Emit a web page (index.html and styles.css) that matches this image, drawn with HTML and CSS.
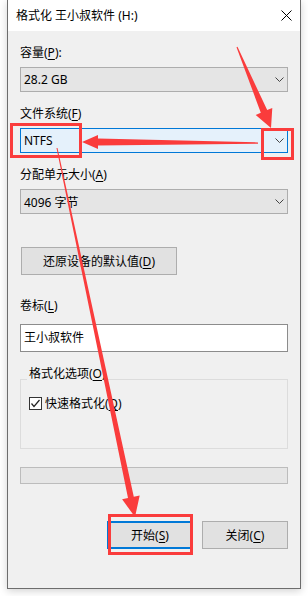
FILE: index.html
```html
<!DOCTYPE html>
<html lang="zh-CN">
<head>
    <meta charset="UTF-8">
    <meta name="viewport" content="width=device-width, initial-scale=1.0">
    <title>格式化 王小叔软件 (H:)</title>
    <link rel="stylesheet" href="styles.css">
</head>
<body>
    <div class="window">
        <div class="titlebar">
            <span class="title">格式化 王小叔软件 (H:)</span>
            <svg class="close" width="11" height="11" viewBox="0 0 11 11">
                <path d="M0.5 0.5 L10.5 10.5 M10.5 0.5 L0.5 10.5" stroke="#000" stroke-width="1" fill="none"/>
            </svg>
        </div>
        <div class="content">
            <div class="label first">容量(<u>P</u>):</div>
            <div class="combo">
                <span>28.2 GB</span>
                <svg class="chevron" width="9" height="5" viewBox="0 0 9 5"><polyline points="0.5,0.5 4.5,4.5 8.5,0.5" fill="none" stroke="#444" stroke-width="1"/></svg>
            </div>

            <div class="label">文件系统(<u>F</u>)</div>
            <div class="combo focused">
                <span>NTFS</span>
                <svg class="chevron" width="9" height="5" viewBox="0 0 9 5"><polyline points="0.5,0.5 4.5,4.5 8.5,0.5" fill="none" stroke="#444" stroke-width="1"/></svg>
            </div>

            <div class="label">分配单元大小(<u>A</u>)</div>
            <div class="combo">
                <span>4096 字节</span>
                <svg class="chevron" width="9" height="5" viewBox="0 0 9 5"><polyline points="0.5,0.5 4.5,4.5 8.5,0.5" fill="none" stroke="#444" stroke-width="1"/></svg>
            </div>

            <button class="btn restore">还原设备的默认值(<u>D</u>)</button>

            <div class="label volume">卷标(<u>L</u>)</div>
            <div class="textbox">王小叔软件</div>

            <fieldset class="group">
                <legend>格式化选项(<u>O</u>)</legend>
                <div class="check-row">
                    <span class="checkbox">
                        <svg width="11" height="11" viewBox="0 0 11 11"><polyline points="1.5,5.5 4,8.5 9.5,2" fill="none" stroke="#222" stroke-width="1.2"/></svg>
                    </span>
                    <span>快速格式化(<u>Q</u>)</span>
                </div>
            </fieldset>

            <div class="progress"></div>

            <div class="actions">
                <button class="btn action default">开始(<u>S</u>)</button>
                <button class="btn action">关闭(<u>C</u>)</button>
            </div>
        </div>
    </div>

    <!-- annotation marks drawn over the dialog -->
    <svg class="marks" width="308" height="596" viewBox="0 0 308 596">
        <g fill="none" stroke="#fa3c3c" stroke-width="3">
            <rect x="11.5" y="124.5" width="69" height="32"/>
            <rect x="262.5" y="129.5" width="30" height="29"/>
            <rect x="109.5" y="515.5" width="82" height="38"/>
        </g>
        <g fill="#fa3c3c">
            <polygon points="237.5,46.8 267.2,110 272.3,107.9 271,128 255.7,114.9 260.8,112.8 236.5,47.2"/>
            <polygon points="258,142.4 98,138.4 98,135 82,142 98,149 98,145.6 258,143.8"/>
            <polygon points="57.5,147.9 133.8,496.8 139.7,495.5 135,517 122.1,499.3 128,498 56.5,148.1"/>
        </g>
    </svg>
</body>
</html>
```

FILE: styles.css
```css
body {
    margin: 0;
    background: #fff;
    font-family: "Noto Sans", "Noto Sans CJK SC", sans-serif;
    font-size: 12px;
    color: #000;
    position: relative;
    width: 308px;
    height: 596px;
    overflow: hidden;
}
.window {
    margin-left: 7px;
    width: 294px;
    height: 589px;
    box-sizing: border-box;
    border: 1px solid #6d6d6d;
    border-top: none;
    background: #f0f0f0;
    box-shadow: 0 2px 8px rgba(0, 0, 0, 0.18);
    display: flex;
    flex-direction: column;
}
.titlebar {
    height: 31px;
    background: #fff;
    display: flex;
    align-items: center;
    justify-content: space-between;
    padding: 0 8px 0 8px;
}
.title {
    line-height: 16px;
    margin-top: 1px;
}
.close {
    display: block;
    margin-top: -1px;
}
.content {
    padding: 0 12px;
    display: flex;
    flex-direction: column;
}
u {
    text-decoration-thickness: 1px;
    text-underline-offset: 2px;
}
.label {
    height: 16px;
    line-height: 16px;
    margin-top: 14px;
    margin-bottom: 6px;
}
.label.first {
    margin-top: 14px;
}
.combo {
    height: 25px;
    box-sizing: border-box;
    border: 1px solid #adadad;
    background: #e5e5e5;
    display: flex;
    align-items: center;
    justify-content: space-between;
    padding: 0 3px;
}
.combo.focused {
    background: #e5f1fb;
    border-color: #0078d7;
}
.chevron {
    display: block;
}
.btn {
    font-family: inherit;
    font-size: 12px;
    color: #000;
    background: #e1e1e1;
    border: 1px solid #adadad;
    padding: 0;
    height: 28px;
    box-sizing: border-box;
}
.restore {
    width: 156px;
    margin-top: 33px;
    margin-left: 1px;
    align-self: flex-start;
}
.label.volume {
    margin-top: 23px;
    margin-bottom: 10px;
}
.textbox {
    height: 28px;
    box-sizing: border-box;
    border: 1px solid #8c8c8c;
    background: #fff;
    padding: 0 3px;
    line-height: 26px;
}
.group {
    margin: 14px 0 0 0;
    padding: 3px 8px 37px 8px;
    border: 1px solid #dcdcdc;
    min-width: 0;
}
.group legend {
    line-height: 16px;
    padding: 0 2px 10px 2px;
    margin-left: -2px;
}
.check-row {
    display: flex;
    align-items: center;
    gap: 3px;
    height: 16px;
}
.checkbox {
    width: 13px;
    height: 13px;
    box-sizing: border-box;
    border: 1px solid #333;
    background: #fff;
    display: flex;
    align-items: center;
    justify-content: center;
}
.checkbox svg {
    display: block;
}
.progress {
    height: 17px;
    box-sizing: border-box;
    margin-top: 18px;
    border: 1px solid #bcbcbc;
    background: #e6e6e6;
}
.actions {
    display: flex;
    justify-content: flex-end;
    gap: 9px;
    margin-top: 37px;
}
.action {
    width: 86px;
}
.default {
    border: 2px solid #0078d7;
}
.marks {
    position: absolute;
    top: 0;
    left: 0;
    pointer-events: none;
}
```
